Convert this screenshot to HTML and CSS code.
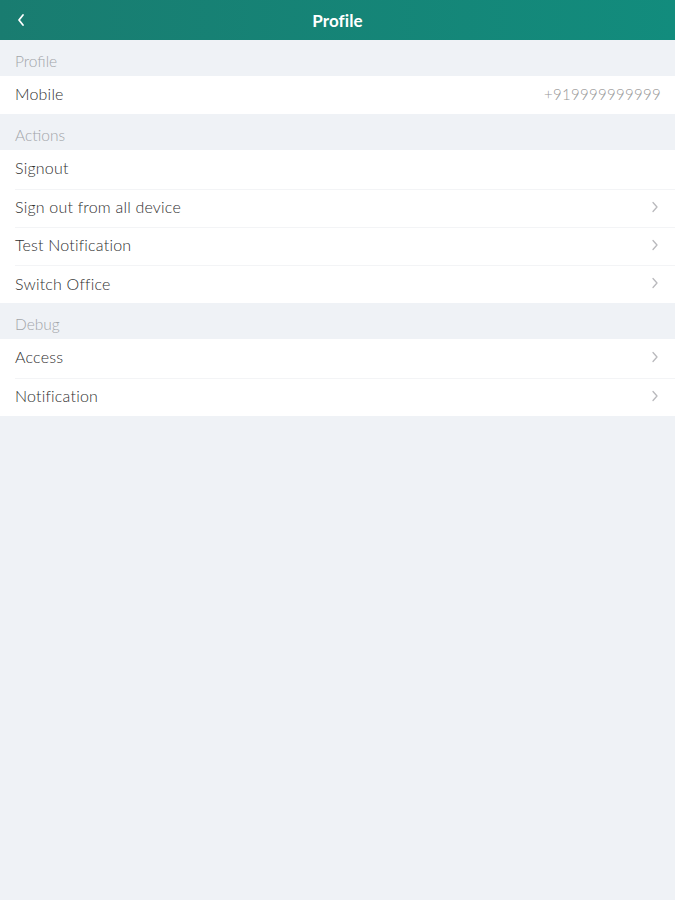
FILE: index.html
```html
<!DOCTYPE html>
<html>
<head>
<meta charset="utf-8">
<link rel="stylesheet" href="styles.css">
</head>
<body>
<header class="navbar">
  <span class="back">
    <svg width="10" height="14" viewBox="0 0 10 14"><path d="M7 2 L3 7 L7 12" fill="none" stroke="#fff" stroke-width="1.8" stroke-linecap="round" stroke-linejoin="round"/></svg>
  </span>
  <h1 class="title">Profile</h1>
</header>
<main>
  <div class="section-head">Profile</div>
  <div class="group">
    <div class="row"><span class="label">Mobile</span><span class="value">+919999999999</span></div>
  </div>
  <div class="section-head">Actions</div>
  <div class="group">
    <div class="row"><span class="label">Signout</span></div>
    <div class="row"><span class="label">Sign out from all device</span><svg class="chev" width="8" height="12" viewBox="0 0 8 12"><path d="M2 1.5 L6 6 L2 10.5" fill="none" stroke="#b9b9bd" stroke-width="1.3" stroke-linecap="round" stroke-linejoin="round"/></svg></div>
    <div class="row"><span class="label">Test Notification</span><svg class="chev" width="8" height="12" viewBox="0 0 8 12"><path d="M2 1.5 L6 6 L2 10.5" fill="none" stroke="#b9b9bd" stroke-width="1.3" stroke-linecap="round" stroke-linejoin="round"/></svg></div>
    <div class="row"><span class="label">Switch Office</span><svg class="chev" width="8" height="12" viewBox="0 0 8 12"><path d="M2 1.5 L6 6 L2 10.5" fill="none" stroke="#b9b9bd" stroke-width="1.3" stroke-linecap="round" stroke-linejoin="round"/></svg></div>
  </div>
  <div class="section-head">Debug</div>
  <div class="group">
    <div class="row"><span class="label">Access</span><svg class="chev" width="8" height="12" viewBox="0 0 8 12"><path d="M2 1.5 L6 6 L2 10.5" fill="none" stroke="#b9b9bd" stroke-width="1.3" stroke-linecap="round" stroke-linejoin="round"/></svg></div>
    <div class="row"><span class="label">Notification</span><svg class="chev" width="8" height="12" viewBox="0 0 8 12"><path d="M2 1.5 L6 6 L2 10.5" fill="none" stroke="#b9b9bd" stroke-width="1.3" stroke-linecap="round" stroke-linejoin="round"/></svg></div>
  </div>
</main>
</body>
</html>
```
FILE: styles.css
```css
html, body {
  margin: 0;
  padding: 0;
  background: #eff2f6;
  font-family: Lato, "Noto Sans", sans-serif;
  height: 100%;
}
.navbar {
  height: 40px;
  background: linear-gradient(90deg, #197c70 0%, #128c7d 100%);
  display: flex;
  align-items: center;
  justify-content: center;
  position: relative;
}
.back {
  position: absolute;
  left: 16px;
  top: 13px;
  display: flex;
}
.title {
  margin: 0;
  color: #fff;
  font-size: 17px;
  font-weight: 700;
  letter-spacing: 0.1px;
}
.section-head {
  height: 36px;
  box-sizing: border-box;
  padding-top: 6px;
  display: flex;
  align-items: center;
  padding-left: 15px;
  color: #a2a5a9;
  font-size: 15.5px;
  font-weight: 300;
}
.group {
  background: #fff;
}
.row {
  height: 38.25px;
  display: flex;
  align-items: center;
  justify-content: space-between;
  margin-left: 15px;
  padding-right: 14px;
  padding-bottom: 3px;
  border-top: 1px solid #f3f4f6;
  box-sizing: border-box;
}
.row:first-child {
  border-top: none;
}
.label {
  color: #2f2f2f;
  font-size: 16px;
  font-weight: 300;
  letter-spacing: 0.2px;
}
.value {
  color: #979797;
  font-size: 15px;
  font-weight: 300;
  letter-spacing: 0.3px;
}
.chev {
  margin-right: 2px;
}
```
